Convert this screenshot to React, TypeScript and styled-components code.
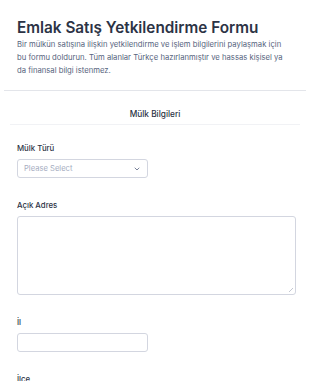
import React from "react";
import styled, { createGlobalStyle } from "styled-components";

const GlobalStyle = createGlobalStyle`
  * { box-sizing: border-box; }
  body {
    margin: 0;
    background: #ffffff;
    font-family: Inter, "Noto Sans", sans-serif;
  }
`;

const fields = [
  { label: "Mülk Türü", kind: "select" },
  { label: "Açık Adres", kind: "textarea" },
  { label: "İl", kind: "input" },
  { label: "İlçe", kind: "input" },
];

export default function App() {
  return (
    <Page>
      <GlobalStyle />
      <Header>
        <Title>Emlak Satış Yetkilendirme Formu</Title>
        <Description>
          Bir mülkün satışına ilişkin yetkilendirme ve işlem bilgilerini
          paylaşmak için bu formu doldurun. Tüm alanlar Türkçe hazırlanmıştır ve
          hassas kişisel ya da finansal bilgi istenmez.
        </Description>
      </Header>
      <Section>
        <SectionTitle>Mülk Bilgileri</SectionTitle>
        <Fields>
          {fields.map((f) => (
            <Field key={f.label}>
              <Label>{f.label}</Label>
              {f.kind === "select" && (
                <SelectBox>
                  <span>Please Select</span>
                  <svg width="6" height="4" viewBox="0 0 6 4">
                    <path
                      d="M1 1l2 2l2-2"
                      fill="none"
                      stroke="#6b7590"
                      strokeWidth="0.9"
                      strokeLinecap="round"
                      strokeLinejoin="round"
                    />
                  </svg>
                </SelectBox>
              )}
              {f.kind === "textarea" && <TextArea />}
              {f.kind === "input" && <TextInput />}
            </Field>
          ))}
        </Fields>
      </Section>
    </Page>
  );
}

const Page = styled.div`
  width: 310px;
  overflow: hidden;
`;

const Header = styled.div`
  margin: 0 4px;
  padding: 18px 19px 13px 13px;
  border-bottom: 1px solid #e3e5ea;
`;

const Title = styled.h1`
  margin: 0;
  font-size: 15.3px;
  line-height: 20px;
  font-weight: 600;
  color: #2c3345;
  white-space: nowrap;
`;

const Description = styled.p`
  margin: 0;
  font-size: 7.7px;
  line-height: 13px;
  color: #57647e;
  font-weight: 400;
`;

const Section = styled.div`
  padding: 0 10px;
`;

const SectionTitle = styled.div`
  padding: 17px 0 4px;
  border-bottom: 1px solid #f1f2f5;
  text-align: center;
  font-size: 8.3px;
  line-height: 12px;
  font-weight: 500;
  color: #2c3345;
`;

const Fields = styled.div`
  display: flex;
  flex-direction: column;
  gap: 21px;
  padding: 17px 7px 0;
`;

const Field = styled.div`
  display: flex;
  flex-direction: column;
  gap: 5px;
`;

const Label = styled.label`
  font-size: 7.8px;
  line-height: 12px;
  font-weight: 500;
  color: #2c3345;
`;

const SelectBox = styled.div`
  width: 131px;
  height: 19px;
  border: 1px solid #d3d6e0;
  border-radius: 3px;
  display: flex;
  align-items: center;
  justify-content: space-between;
  padding: 0 7px 0 6px;
  font-size: 7.6px;
  color: #a6adc1;
`;

const TextArea = styled.div`
  width: 279px;
  height: 79px;
  border: 1px solid #d3d6e0;
  border-radius: 3px;
  position: relative;

  &::after {
    content: "";
    position: absolute;
    right: 2px;
    bottom: 2px;
    width: 4px;
    height: 4px;
    background: linear-gradient(
      135deg,
      transparent 45%,
      #c4c8d2 45%,
      #c4c8d2 55%,
      transparent 55%
    );
  }
`;

const TextInput = styled.div`
  width: 131px;
  height: 19px;
  border: 1px solid #d3d6e0;
  border-radius: 3px;
`;
